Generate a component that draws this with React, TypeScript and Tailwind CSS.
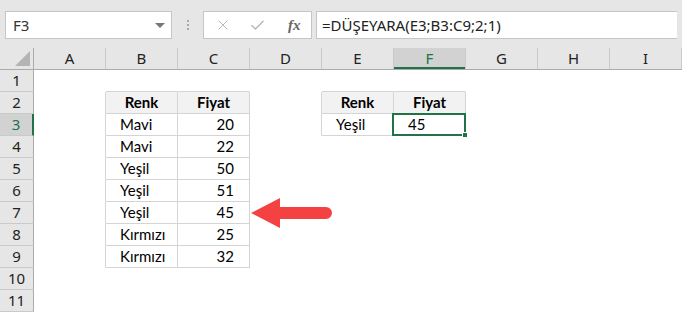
import { X, Check } from 'lucide-react';

const COLS = ['A', 'B', 'C', 'D', 'E', 'F', 'G', 'H', 'I'];

type Cell = { text?: string; bold?: boolean; align?: 'left' | 'center' | 'right'; head?: boolean; box?: boolean };

const data: Record<string, Cell> = {
    B2: { text: 'Renk', bold: true, align: 'center', head: true, box: true },
    C2: { text: 'Fiyat', bold: true, align: 'center', head: true, box: true },
    B3: { text: 'Mavi', box: true }, C3: { text: '20', align: 'right', box: true },
    B4: { text: 'Mavi', box: true }, C4: { text: '22', align: 'right', box: true },
    B5: { text: 'Yeşil', box: true }, C5: { text: '50', align: 'right', box: true },
    B6: { text: 'Yeşil', box: true }, C6: { text: '51', align: 'right', box: true },
    B7: { text: 'Yeşil', box: true }, C7: { text: '45', align: 'right', box: true },
    B8: { text: 'Kırmızı', box: true }, C8: { text: '25', align: 'right', box: true },
    B9: { text: 'Kırmızı', box: true }, C9: { text: '32', align: 'right', box: true },
    E2: { text: 'Renk', bold: true, align: 'center', head: true, box: true },
    F2: { text: 'Fiyat', bold: true, align: 'center', head: true, box: true },
    E3: { text: 'Yeşil', box: true }, F3: { text: '45', box: true },
};

// gridlines are off, so only cells of the two little tables get a border
function borderFor(col: number, row: number) {
    const key = COLS[col] + row;
    const right = COLS[col + 1] ? data[COLS[col + 1] + row] : undefined;
    const below = data[COLS[col] + (row + 1)];
    const cls: string[] = [];
    if (data[key]?.box || right?.box) cls.push('border-r border-r-[#d4d4d4]');
    else cls.push('border-r border-r-transparent');
    if (data[key]?.box || below?.box) cls.push('border-b border-b-[#d4d4d4]');
    else cls.push('border-b border-b-transparent');
    return cls.join(' ');
}

export default function App() {
    const rows = Array.from({ length: 11 }, (_, i) => i + 1);
    return (
        <div className="relative w-[682px] h-[313px] overflow-hidden bg-white font-['Lato',sans-serif] text-[15px] text-black">
            {/* formula bar */}
            <div className="h-[48px] bg-[#e6e6e6] pt-[11px] px-[5px] flex items-start">
                <div className="w-[167px] h-[28px] bg-white border border-[#c6c6c6] flex items-center justify-between pl-[7px] pr-[6px] font-['Noto_Sans',sans-serif] text-[15px] text-[#333]">
                    <span>F3</span>
                    <span className="w-0 h-0 border-l-[5px] border-r-[5px] border-t-[5px] border-l-transparent border-r-transparent border-t-[#777]" />
                </div>
                <div className="w-[31px] h-[28px] flex flex-col items-center justify-center gap-[2px]">
                    <span className="w-[2px] h-[2px] bg-[#aaa]" />
                    <span className="w-[2px] h-[2px] bg-[#aaa]" />
                    <span className="w-[2px] h-[2px] bg-[#aaa]" />
                </div>
                <div className="w-[109px] h-[28px] bg-white border border-[#c6c6c6] flex items-center pl-[11px]">
                    <X size={16} strokeWidth={1.4} className="text-[#b4b4b4]" />
                    <Check size={17} strokeWidth={1.8} className="text-[#b4b4b4] ml-[18px]" />
                    <span className="ml-[22px] font-['Liberation_Serif',serif] italic font-bold text-[15px] text-[#666]">fx</span>
                </div>
                <div className="ml-[4px] flex-1 h-[28px] bg-white border border-[#c6c6c6] border-r-0 flex items-center pl-[5px] font-['Noto_Sans',sans-serif] text-[15px] text-[#222]">
                    =DÜŞEYARA(E3;B3:C9;2;1)
                </div>
            </div>

            {/* column headers */}
            <div className="flex h-[22px] bg-[#e6e6e6] border-b border-[#ababab] font-['Noto_Sans',sans-serif] text-[15px] text-[#222]">
                <div className="w-[34px] relative border-r border-[#ababab]">
                    <svg className="absolute right-[3px] bottom-[3px]" width="15" height="15" viewBox="0 0 15 15">
                        <path d="M15 0 L15 15 L0 15 Z" fill="#b4b4b4" />
                    </svg>
                </div>
                {COLS.map((c) => (
                    <div
                        key={c}
                        className={
                            'w-[72px] flex items-center justify-center border-r border-[#cacaca] ' +
                            (c === 'F' ? 'bg-[#d2d2d2] shadow-[inset_0_-2px_0_#217346] text-[#217346]' : '')
                        }
                    >
                        {c}
                    </div>
                ))}
            </div>

            {/* rows */}
            {rows.map((r) => (
                <div key={r} className="flex h-[22px]">
                    <div
                        className={
                            'w-[34px] shrink-0 flex items-center justify-center border-b border-r border-b-[#cacaca] font-[\'Noto_Sans\',sans-serif] text-[15px] ' +
                            (r === 3
                                ? 'bg-[#d2d2d2] border-r-2 border-r-[#217346] text-[#217346]'
                                : 'bg-[#e6e6e6] border-r-[#ababab] text-[#222]')
                        }
                    >
                        {r}
                    </div>
                    {COLS.map((c, ci) => {
                        const cell = data[c + r];
                        return (
                            <div
                                key={c}
                                className={
                                    'w-[72px] shrink-0 flex items-center px-[14px] ' +
                                    borderFor(ci, r) +
                                    (cell?.head ? ' bg-[#f2f2f2]' : '') +
                                    (cell?.bold ? ' font-bold' : '') +
                                    (cell?.align === 'center' ? ' justify-center' : cell?.align === 'right' ? ' justify-end pr-[15px]' : '')
                                }
                            >
                                {cell?.text}
                            </div>
                        );
                    })}
                </div>
            ))}

            {/* selected cell F3 */}
            <div className="absolute left-[392px] top-[113px] w-[74px] h-[23px] border-2 border-[#217346] pointer-events-none">
                <span className="absolute -right-[4px] -bottom-[4px] w-[6px] h-[6px] bg-[#217346] border border-white" />
            </div>

            {/* red arrow */}
            <svg className="absolute left-[249px] top-[196px]" width="86" height="34" viewBox="0 0 86 34">
                <path d="M2 17 L31 2 L31 11 L77 11 A6 6 0 0 1 77 23 L31 23 L31 32 Z" fill="#f44242" />
            </svg>
        </div>
    );
}
